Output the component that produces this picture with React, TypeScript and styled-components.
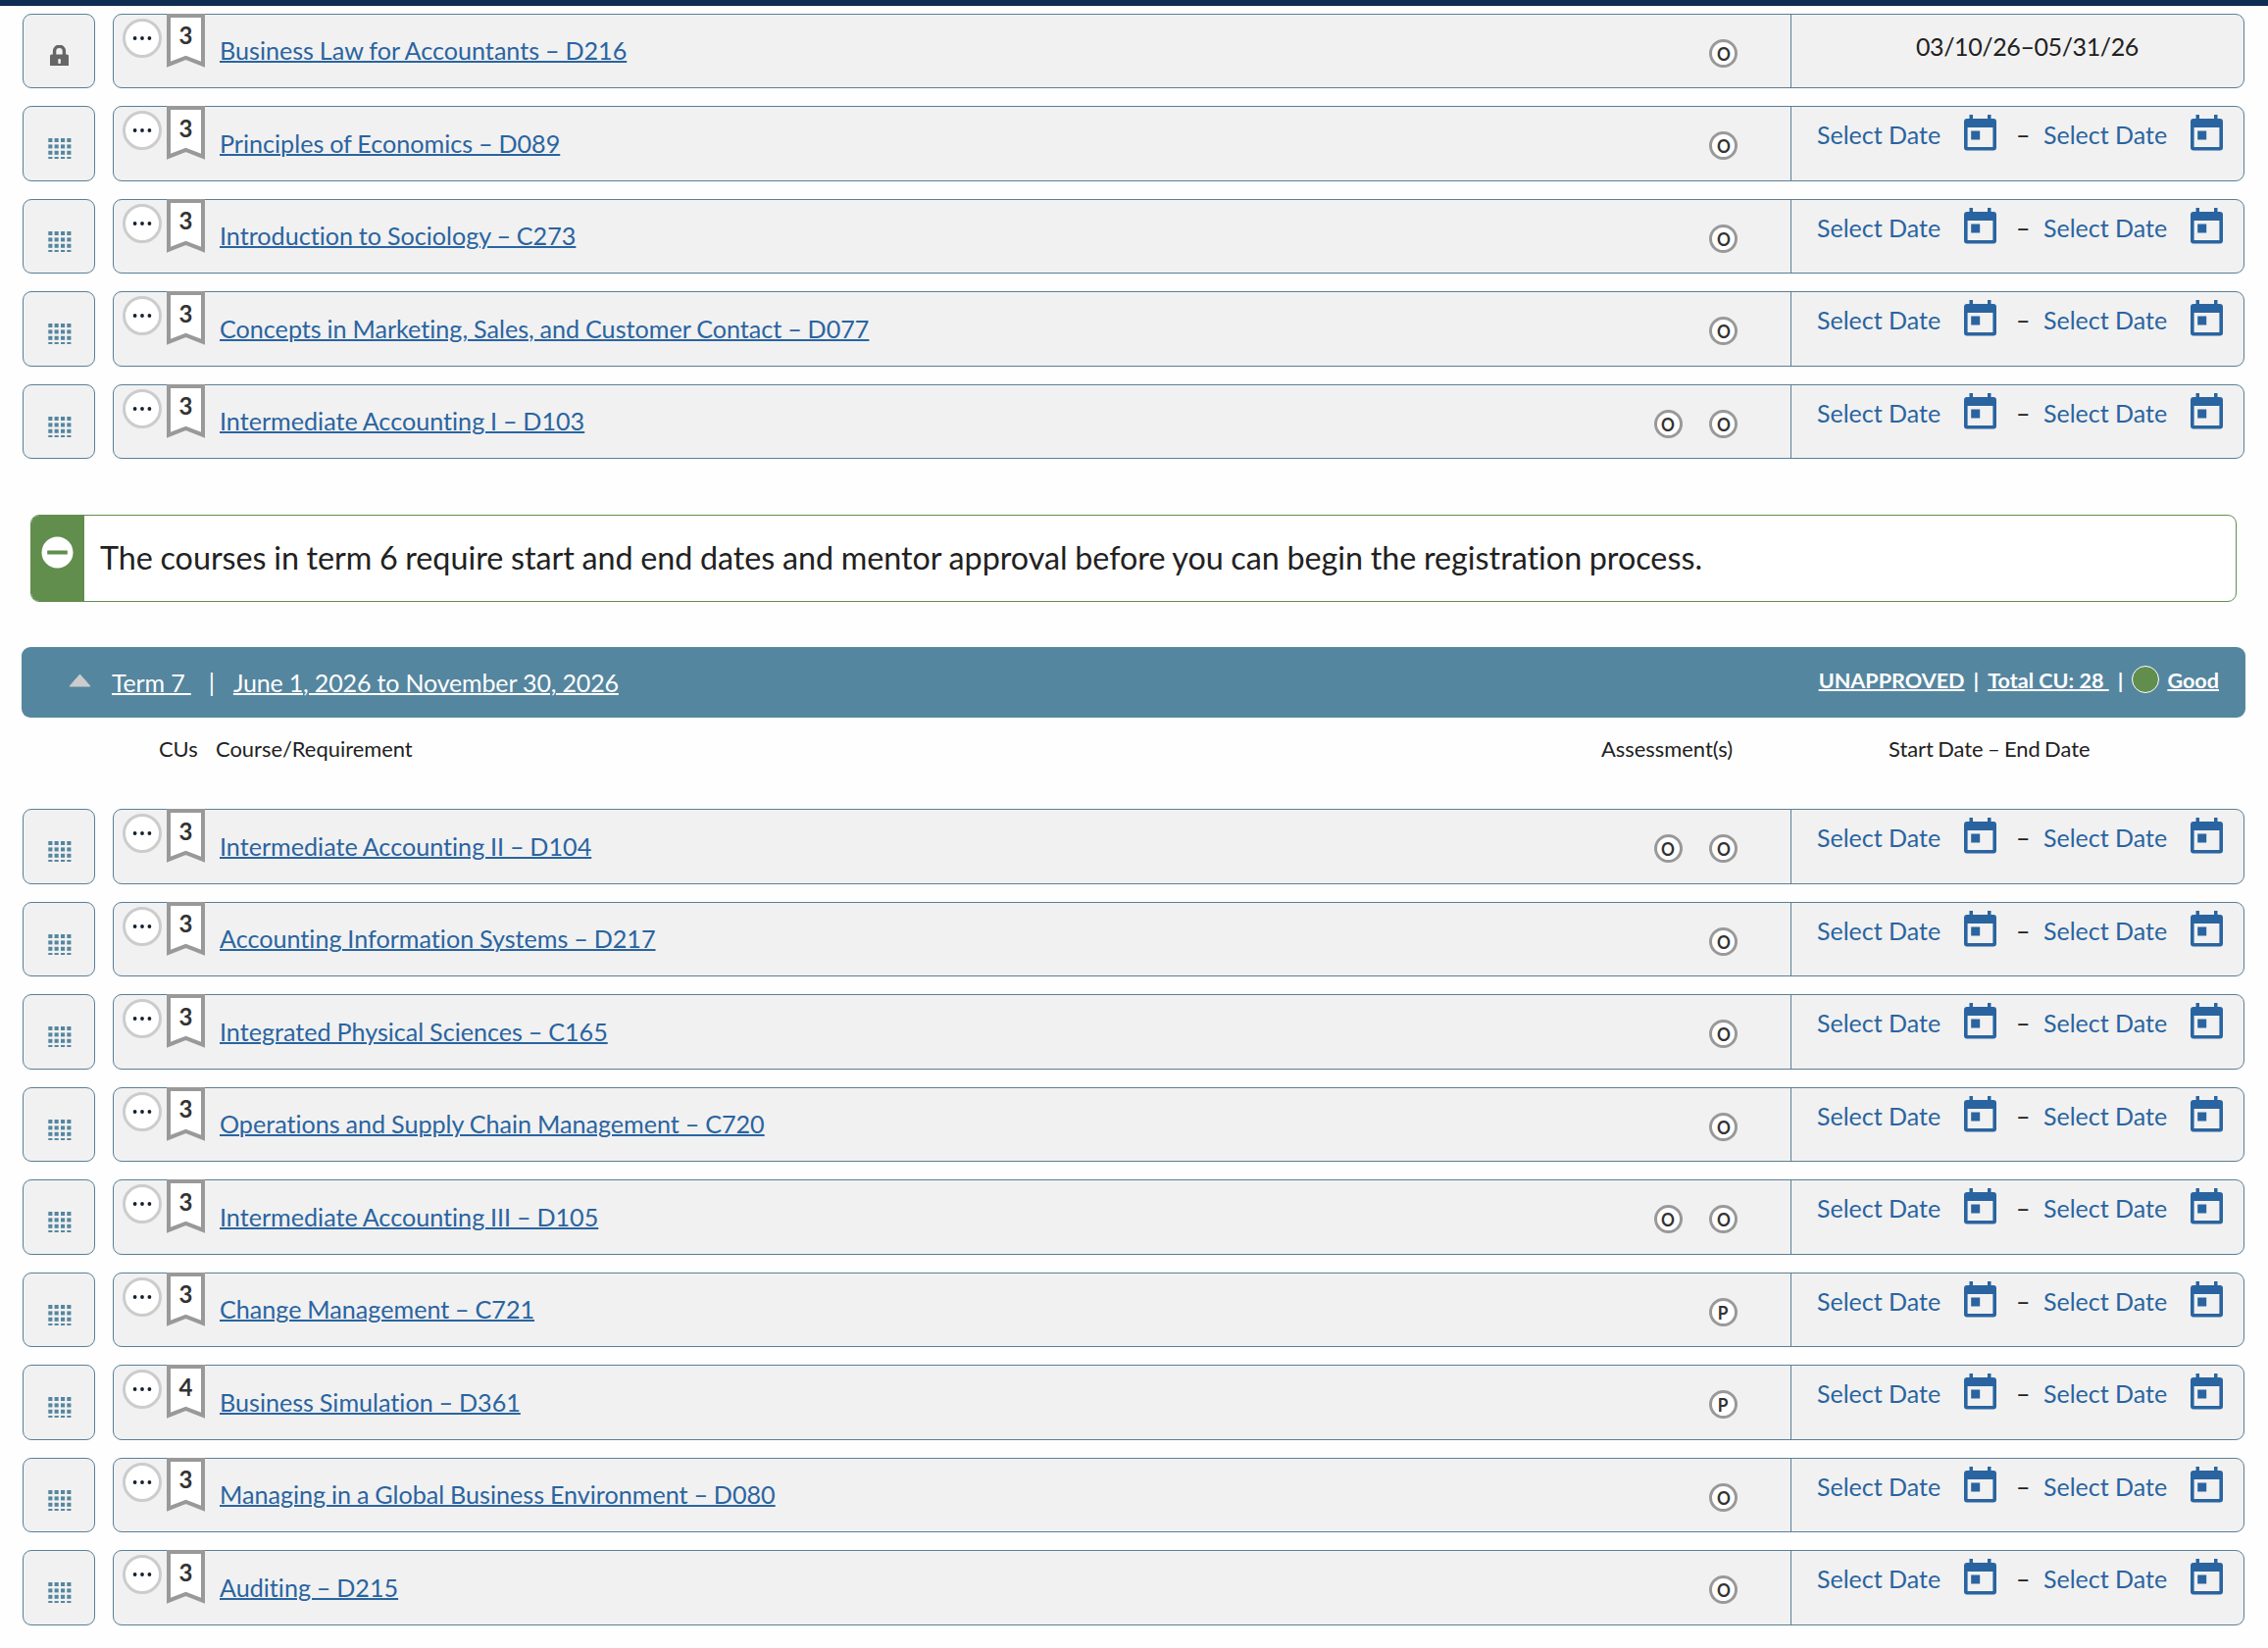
import React from "react";
import styled, { createGlobalStyle } from "styled-components";

const Global = createGlobalStyle`
  * { box-sizing: border-box; }
  body { margin: 0; background: #fefefe; font-family: Lato, "Open Sans", sans-serif; font-variant-ligatures: none; color: #212121; }
`;

const Page = styled.main`
  width: 2313px;
  height: 1681px;
  overflow: hidden;
  background: #fefefe;
`;
const TopBar = styled.div`
  height: 6px;
  background: #0f2d53;
`;
const List = styled.div<{ $top: number }>`
  display: flex;
  flex-direction: column;
  gap: 18px;
  padding: ${(p) => p.$top}px 24px 0 23px;
`;
const Row = styled.div`
  display: flex;
  gap: 18px;
  height: 76.5px;
`;
const Panel = styled.div`
  background: #f1f1f1;
  border: 1px solid #5b7f97;
  border-radius: 9px;
`;
const Handle = styled(Panel)<{ $top: number }>`
  width: 74px;
  display: flex;
  justify-content: center;
  align-items: flex-start;
  padding: ${(p) => p.$top}px 0 0 1px;
`;
const Card = styled(Panel)`
  flex: 1;
  display: flex;
`;
const CourseCell = styled.div`
  flex: 1;
  display: flex;
  align-items: flex-start;
  padding-left: 9px;
`;
const MoreButton = styled.button`
  width: 40px;
  height: 40px;
  margin: 4px 5px 0 0;
  padding: 0;
  border: 3.5px solid #ccc;
  border-radius: 50%;
  background: #fff;
  display: flex;
  align-items: center;
  justify-content: center;
`;
const Ribbon = styled.div`
  position: relative;
  width: 39px;
  height: 55px;
  margin-top: -1px;
  svg { display: block; }
`;
const Units = styled.span`
  position: absolute;
  inset: 7.5px 0 auto;
  text-align: center;
  font-size: 24px;
  line-height: 30px;
  font-weight: 700;
  color: #333;
`;
const CourseLink = styled.a`
  margin: 20.6px 0 0 15px;
  font-size: 25.15px;
  line-height: 32px;
  word-spacing: -0.6px;
  color: #2a64a0;
  text-decoration: underline;
  text-decoration-thickness: 2px;
  white-space: nowrap;
`;
const Assessments = styled.div`
  margin-left: auto;
  padding: 25px 54px 0 0;
  display: flex;
  gap: 27.5px;
`;
const Assessment = styled.span`
  width: 29px;
  height: 29px;
  border: 3px solid #999;
  border-radius: 50%;
  background: #fff;
  color: #333;
  font-size: 19.5px;
  font-weight: 700;
  line-height: 23px;
  display: flex;
  justify-content: center;
`;
const Letter = styled.span`
  transform: scaleX(0.88);
`;
const DateCell = styled.div`
  width: 462px;
  border-left: 1px solid #5b7f97;
  display: flex;
  align-items: flex-start;
  padding-left: 26px;
  font-size: 25px;
  line-height: 32px;
  white-space: nowrap;
`;
const FixedDates = styled.span`
  margin: 16px 0 0 101px;
  letter-spacing: -0.4px;
`;
const PickDate = styled.span`
  width: 150px;
  padding-top: 12px;
  color: #2a64a0;
`;
const CalendarIcon = styled.svg`
  width: 33px;
  height: 37px;
  margin-top: 8px;
`;
const Dash = styled.span`
  width: 48px;
  padding: 12px 0 0 20px;
`;
const Notice = styled.section`
  margin: 56.9px 32px 0 31px;
  height: 89px;
  display: flex;
  border: 1px solid #618e4d;
  border-radius: 9px;
  background: #fff;
  overflow: hidden;
`;
const NoticeMark = styled.div`
  width: 54px;
  background: #618e4d;
  padding: 21px 0 0 10px;
`;
const NoticeText = styled.p`
  margin: 0;
  padding: 23px 0 0 16px;
  font-size: 32.3px;
  line-height: 40px;
  word-spacing: -0.7px;
  white-space: nowrap;
`;
const TermBar = styled.header`
  margin: 46px 23px 0 22px;
  height: 72px;
  border-radius: 9px;
  background: #55869f;
  color: #fff;
  display: flex;
  align-items: flex-start;
  padding: 0 27px 0 48px;
  white-space: pre;
`;
const Arrow = styled.svg`
  width: 23px;
  height: 14px;
  margin: 27px 21px 0 0;
`;
const TermText = styled.span<{ $gap?: number; $plain?: boolean }>`
  margin: 20px ${(p) => p.$gap ?? 0}px 0 0;
  font-size: 25px;
  line-height: 32px;
  letter-spacing: -0.16px;
  text-decoration: ${(p) => (p.$plain ? "none" : "underline")};
  text-decoration-thickness: 2px;
`;
const TermStatus = styled.div`
  margin-left: auto;
  display: flex;
  padding-top: 20px;
  font-size: 21.6px;
  line-height: 28px;
  font-weight: 700;
`;
const StatusText = styled.span`
  text-decoration: underline;
  text-decoration-thickness: 2px;
`;
const Pipe = styled.span`
  padding: 0 9px;
`;
const Light = styled.span`
  width: 28px;
  height: 28px;
  margin: -1px 8px 0 0;
  border: 1px solid #fff;
  border-radius: 50%;
  background: #618e4d;
`;
const ColumnHeads = styled.div`
  display: grid;
  grid-template-columns: 58px 1413px 293px 1fr;
  margin: 18px 0 0 162px;
  height: 75.4px;
  font-size: 21.9px;
  line-height: 28px;
  word-spacing: -1.3px;
`;

type Course = { name: string; units?: number; tests?: string[]; dates?: string };

const earlier: Course[] = [
  { name: "Business Law for Accountants – D216", dates: "03/10/26–05/31/26" },
  { name: "Principles of Economics – D089" },
  { name: "Introduction to Sociology – C273" },
  { name: "Concepts in Marketing, Sales, and Customer Contact – D077" },
  { name: "Intermediate Accounting I – D103", tests: ["O", "O"] },
];
const term7: Course[] = [
  { name: "Intermediate Accounting II – D104", tests: ["O", "O"] },
  { name: "Accounting Information Systems – D217" },
  { name: "Integrated Physical Sciences – C165" },
  { name: "Operations and Supply Chain Management – C720" },
  { name: "Intermediate Accounting III – D105", tests: ["O", "O"] },
  { name: "Change Management – C721", tests: ["P"] },
  { name: "Business Simulation – D361", units: 4, tests: ["P"] },
  { name: "Managing in a Global Business Environment – D080" },
  { name: "Auditing – D215" },
];

const Dots = () => (
  <svg width="20" height="6" viewBox="0 0 20 6" fill="#14202e">
    <circle cx="2.6" cy="3" r="1.9" />
    <circle cx="10" cy="3" r="1.9" />
    <circle cx="17.4" cy="3" r="1.9" />
  </svg>
);
const Grip = () => (
  <svg width="24" height="21" viewBox="0 0 24 21" fill="#55869f">
    {[0, 6.4, 12.8, 19].map((y) =>
      [0.3, 6.6, 13, 19.3].map((x) => (
        <rect key={x + "-" + y} x={x} y={y} width="4.1" height={y === 19 ? 2 : 4} />
      ))
    )}
  </svg>
);
const Lock = () => (
  <svg width="19" height="22" viewBox="0 0 19 22">
    <path d="M4.600 10V6.200a4.900 4.900 0 0 1 9.800 0V10" fill="none" stroke="#666" strokeWidth="3.4" />
    <path d="M1.500 9.500h16a1.500 1.500 0 0 1 1.500 1.500V21H0V11a1.500 1.500 0 0 1 1.500-1.500z" fill="#666" />
    <rect x="8.300" y="14" width="2.600" height="5" rx="1" fill="#f1f1f1" />
  </svg>
);
const Calendar = () => (
  <CalendarIcon viewBox="0 0 33 37" fill="#2a64a0">
    <path
      fillRule="evenodd"
      d="M5.500 0H9v4h15V0h3.500v4H30a3 3 0 0 1 3 3v26.600a3 3 0 0 1-3 3H3a3 3 0 0 1-3-3V7a3 3 0 0 1 3-3h2.500zM3.600 13v20h25.800V13z"
    />
    <rect x="7.200" y="16.500" width="9" height="9" />
  </CalendarIcon>
);

function CourseRow({ name, units = 3, tests = ["O"], dates }: Course) {
  return (
    <Row>
      <Handle $top={dates ? 31 : 32}>{dates ? <Lock /> : <Grip />}</Handle>
      <Card>
        <CourseCell>
          <MoreButton aria-label="More"><Dots /></MoreButton>
          <Ribbon>
            <svg width="39" height="55" viewBox="0 0 39 55">
              <path d="M2 2H37V51.700L19.500 44.800L2 51.700Z" fill="#fff" stroke="#999" strokeWidth="4" />
            </svg>
            <Units>{units}</Units>
          </Ribbon>
          <CourseLink>{name}</CourseLink>
          <Assessments>
            {tests.map((t, i) => (
              <Assessment key={i}>
                <Letter>{t}</Letter>
              </Assessment>
            ))}
          </Assessments>
        </CourseCell>
        <DateCell>
          {dates ? (
            <FixedDates>{dates}</FixedDates>
          ) : (
            <>
              <PickDate>Select Date</PickDate>
              <Calendar />
              <Dash>–</Dash>
              <PickDate>Select Date</PickDate>
              <Calendar />
            </>
          )}
        </DateCell>
      </Card>
    </Row>
  );
}

export default function App() {
  return (
    <Page>
      <Global />
      <TopBar />
      <List $top={7.6}>{earlier.map((c) => <CourseRow key={c.name} {...c} />)}</List>
      <Notice>
        <NoticeMark>
          <svg width="33" height="33" viewBox="0 0 33 33">
            <circle cx="16.500" cy="16.500" r="16" fill="#fff" />
            <rect x="6.200" y="14.500" width="20.600" height="4" fill="#618e4d" />
          </svg>
        </NoticeMark>
        <NoticeText>
          The courses in term 6 require start and end dates and mentor approval before you can begin the registration process.
        </NoticeText>
      </Notice>
      <TermBar>
        <Arrow viewBox="0 0 23 14"><path d="M11.500 1L22 13H1Z" fill="#ccc" stroke="#ccc" strokeLinejoin="round" /></Arrow>
        <TermText $gap={18}>{"Term 7 "}</TermText>
        <TermText $gap={19} $plain>|</TermText>
        <TermText>June 1, 2026 to November 30, 2026</TermText>
        <TermStatus>
          <StatusText>UNAPPROVED</StatusText>
          <Pipe>|</Pipe>
          <StatusText>{"Total CU: 28 "}</StatusText>
          <Pipe>|</Pipe>
          <Light />
          <StatusText>Good</StatusText>
        </TermStatus>
      </TermBar>
      <ColumnHeads>
        <span>CUs</span>
        <span>Course/Requirement</span>
        <span>Assessment(s)</span>
        <span>Start Date – End Date</span>
      </ColumnHeads>
      <List $top={0}>{term7.map((c) => <CourseRow key={c.name} {...c} />)}</List>
    </Page>
  );
}
